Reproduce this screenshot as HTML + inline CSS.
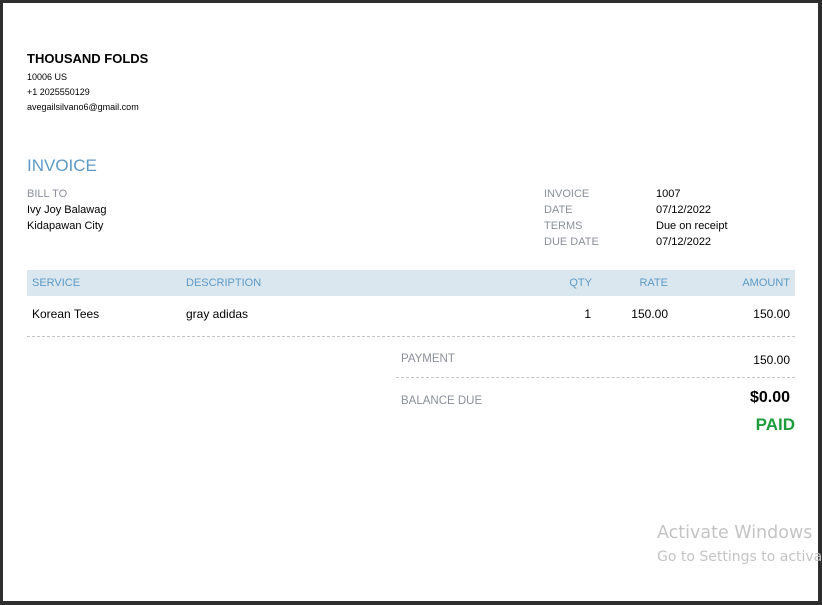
<!DOCTYPE html>
<html><head><meta charset="utf-8"><style>
*{margin:0;padding:0;box-sizing:border-box}
body{width:822px;height:605px;background:#2e2e2e;position:relative;overflow:hidden;font-family:"Liberation Sans",Arial,sans-serif}
#pg{position:absolute;left:3px;top:3px;width:815px;height:598px;background:#fff}
.a{position:absolute;white-space:nowrap;line-height:1}
.g{color:#8a8f98;font-size:11px}
.k{color:#000;font-size:11px}
.h{color:#5d9ac6;font-size:11px}
</style></head><body>
<div id="pg"></div>
<div class="a" style="left:27px;top:52px;font-size:13px;font-weight:bold;color:#000">THOUSAND FOLDS</div>
<div class="a" style="left:27px;top:73px;font-size:9px">10006 US</div>
<div class="a" style="left:27px;top:88px;font-size:9px">+1 2025550129</div>
<div class="a" style="left:27px;top:103px;font-size:9px">avegailsilvano6@gmail.com</div>
<div class="a" style="left:27px;top:157px;font-size:17px;color:#5d9ac6">INVOICE</div>
<div class="a g" style="left:27px;top:189px">BILL TO</div>
<div class="a k" style="left:27px;top:205px">Ivy Joy Balawag</div>
<div class="a k" style="left:27px;top:221px">Kidapawan City</div>
<div class="a g" style="left:544px;top:189px">INVOICE</div>
<div class="a g" style="left:544px;top:205px">DATE</div>
<div class="a g" style="left:544px;top:221px">TERMS</div>
<div class="a g" style="left:544px;top:237px">DUE DATE</div>
<div class="a k" style="left:656px;top:189px">1007</div>
<div class="a k" style="left:656px;top:205px">07/12/2022</div>
<div class="a k" style="left:656px;top:221px">Due on receipt</div>
<div class="a k" style="left:656px;top:237px">07/12/2022</div>
<div class="a" style="left:27px;top:270px;width:768px;height:26px;background:#dae7ef"></div>
<div class="a h" style="left:32px;top:278px">SERVICE</div>
<div class="a h" style="left:186px;top:278px">DESCRIPTION</div>
<div class="a h" style="right:230px;top:278px">QTY</div>
<div class="a h" style="right:154px;top:278px">RATE</div>
<div class="a h" style="right:32px;top:278px">AMOUNT</div>
<div class="a" style="left:32px;top:308px;font-size:12px">Korean Tees</div>
<div class="a" style="left:186px;top:308px;font-size:12px">gray adidas</div>
<div class="a" style="right:231px;top:308px;font-size:12px">1</div>
<div class="a" style="right:154px;top:308px;font-size:12px">150.00</div>
<div class="a" style="right:32px;top:308px;font-size:12px">150.00</div>
<div class="a" style="left:27px;top:336px;width:768px;border-top:1px dashed #c4c4c4"></div>
<div class="a g" style="left:401px;top:354px;font-size:11.5px">PAYMENT</div>
<div class="a" style="right:32px;top:354px;font-size:12px">150.00</div>
<div class="a" style="left:396px;top:377px;width:399px;border-top:1px dashed #c4c4c4"></div>
<div class="a g" style="left:401px;top:396px;font-size:11.5px">BALANCE DUE</div>
<div class="a" style="right:32px;top:390px;font-size:16px;font-weight:bold">$0.00</div>
<div class="a" style="right:27px;top:416px;font-size:17px;font-weight:bold;color:#1d9c3c">PAID</div>
<div class="a" style="left:657px;top:525px;color:#c4c4c4;font-family:'DejaVu Sans',sans-serif;font-size:17.5px">Activate Windows</div>
<div class="a" style="left:657px;top:550px;font-size:14px;color:#c4c4c4;font-family:'DejaVu Sans',sans-serif">Go to Settings to activate</div>
</body></html>
